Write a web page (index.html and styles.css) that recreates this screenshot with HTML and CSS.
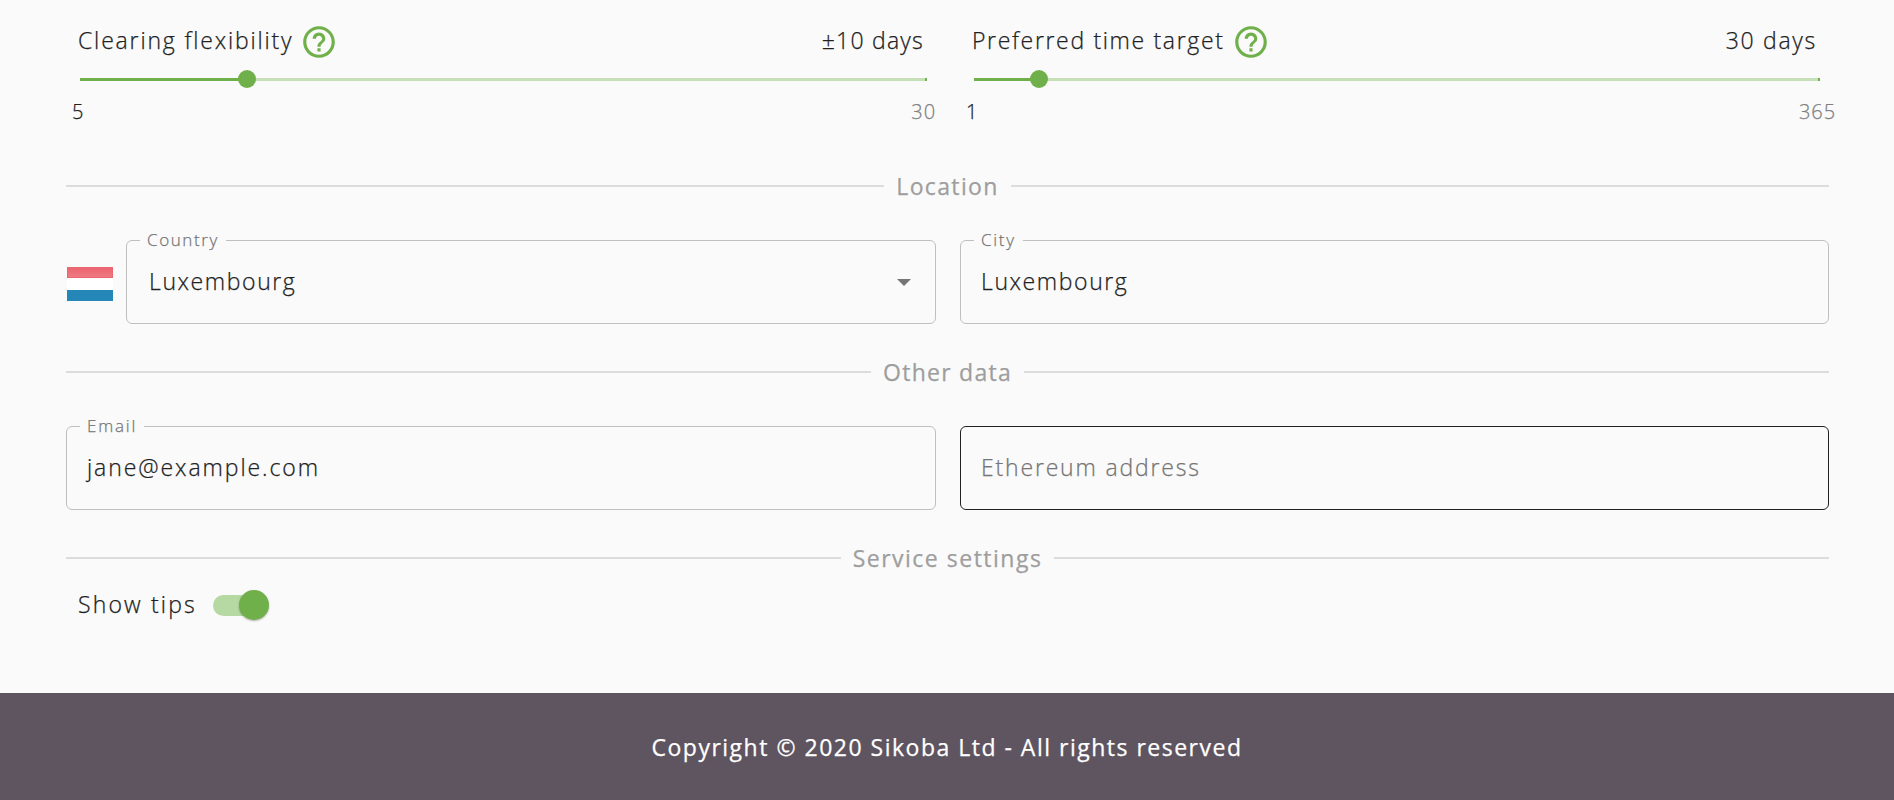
FILE: index.html
```html
<!DOCTYPE html>
<html lang="en">
<head>
<meta charset="utf-8">
<title>Account settings</title>
<link rel="stylesheet" href="styles.css">
</head>
<body>
<main class="settings">
  <section class="sliders">
    <div class="slider">
      <div class="slider-head">
        <span class="text t-clearing">Clearing flexibility</span>
        <svg class="help" viewBox="0 0 24 24"><path d="M11 18h2v-2h-2v2zm1-16C6.480 2 2 6.480 2 12s4.480 10 10 10 10-4.480 10-10S17.520 2 12 2zm0 18c-4.410 0-8-3.590-8-8s3.590-8 8-8 8 3.590 8 8-3.590 8-8 8zm0-14c-2.210 0-4 1.790-4 4h2c0-1.100.9-2 2-2s2 .9 2 2c0 2-3 1.750-3 5h2c0-2.250 3-2.500 3-5 0-2.210-1.790-4-4-4z"/></svg>
        <span class="text value t-ten">±10 days</span>
      </div>
      <div class="rail"><div class="track" style="width:19.7%"></div><div class="thumb" style="left:19.7%"></div><i class="mark"></i></div>
      <div class="limits"><span class="limit low">5</span><span class="limit high">30</span></div>
    </div>
    <div class="slider">
      <div class="slider-head">
        <span class="text t-preferred">Preferred time target</span>
        <svg class="help" viewBox="0 0 24 24"><path d="M11 18h2v-2h-2v2zm1-16C6.480 2 2 6.480 2 12s4.480 10 10 10 10-4.480 10-10S17.520 2 12 2zm0 18c-4.410 0-8-3.590-8-8s3.590-8 8-8 8 3.590 8 8-3.590 8-8 8zm0-14c-2.210 0-4 1.790-4 4h2c0-1.100.9-2 2-2s2 .9 2 2c0 2-3 1.750-3 5h2c0-2.250 3-2.500 3-5 0-2.210-1.790-4-4-4z"/></svg>
        <span class="text value t-thirty">30 days</span>
      </div>
      <div class="rail"><div class="track" style="width:7.7%"></div><div class="thumb" style="left:7.7%"></div><i class="mark"></i></div>
      <div class="limits"><span class="limit low">1</span><span class="limit high">365</span></div>
    </div>
  </section>

  <h2 class="divider"><span class="t-location">Location</span></h2>
  <section class="fields">
    <div class="country">
      <div class="flag"><i class="red"></i><i class="white"></i><i class="blue"></i></div>
      <div class="field select">
        <span class="label t-country">Country</span>
        <span class="text t-lux">Luxembourg</span>
        <svg class="arrow" viewBox="0 0 14 7"><path d="M0 0h14L7 7z"/></svg>
      </div>
    </div>
    <div class="field">
      <span class="label t-city">City</span>
      <span class="text t-lux">Luxembourg</span>
    </div>
  </section>

  <h2 class="divider"><span class="t-other">Other data</span></h2>
  <section class="fields">
    <div class="field">
      <span class="label t-email">Email</span>
      <span class="text t-jane">jane@example.com</span>
    </div>
    <div class="field hovered"><span class="text placeholder t-eth">Ethereum address</span></div>
  </section>

  <h2 class="divider"><span class="t-service">Service settings</span></h2>
  <div class="tips">
    <span class="text t-tips">Show tips</span>
    <span class="switch"><i class="knob"></i></span>
  </div>
</main>
<footer class="footer"><span class="t-copy">Copyright © 2020 Sikoba Ltd - All rights reserved</span></footer>
</body>
</html>
```
FILE: styles.css
```css
* { box-sizing: border-box; }
body {
  margin: 0;
  height: 800px;
  overflow: hidden;
  display: flex;
  flex-direction: column;
  background: #fafafa;
  color: #212121;
  font-family: "Open Sans", "Noto Sans", sans-serif;
  font-size: 23px;
  font-weight: 300;
  line-height: 32px;
}
i { display: block; }
span { white-space: nowrap; }
.text, .label, .limit, .divider span, .footer span { -webkit-text-stroke: .25px currentColor; }
.settings { height: 693px; padding: 22px 65px 0 66px; }

.sliders { display: grid; grid-template-columns: 870px 869px; column-gap: 24px; height: 148px; }
.slider-head { display: flex; align-items: center; height: 40px; padding: 0 12px 0 12px; }
.slider-head .text { margin-top: -5px; }
.help { width: 38px; height: 38px; margin-left: 7px; fill: #70b04a; }
.slider-head .value { margin-left: auto; }
.rail { position: relative; height: 3px; margin: 16px 9px 0 14px; background: #c5dfb6; }
.track { height: 3px; background: #70b04a; }
.thumb { position: absolute; top: -8px; width: 18px; height: 18px; margin-left: -9px; border-radius: 50%; background: #70b04a; }
.mark { position: absolute; right: 0; top: 0; width: 2px; height: 3px; background: #70b04a; }
.limits { display: flex; justify-content: space-between; height: 32px; margin-top: 15px; padding-left: 6px; font-size: 20px; letter-spacing: .9px; }
.high { color: #808080; }
.slider:last-child .high { margin-right: -7px; }

.divider { display: flex; align-items: center; gap: 12px; height: 32px; margin: 0; color: #9e9e9e; font-size: 23px; font-weight: 400; }
.divider span { height: 32px; }
.divider::before, .divider::after { content: ""; flex: 1; height: 2px; background: #dcdcdc; }

.fields { display: grid; grid-template-columns: 870px 869px; column-gap: 24px; height: 154px; padding-top: 38px; }
.country { display: flex; }
.flag { width: 46px; margin: 27px 13px 0 1px; }
.flag i { height: 11px; }
.flag .red { background: linear-gradient(#ec6570, #ee7a81); border: 1px solid #ea6670; }
.flag .white { height: 12px; background: #fff; }
.flag .blue { background: #2487b8; }
.field { position: relative; display: flex; align-items: center; height: 84px; padding: 0 20px; border: 1px solid #bfbfbf; border-radius: 6px; }
.field .text { height: 34px; }
.select { flex: 1; padding: 0 24px 0 22px; }
.hovered { border-color: #212121; }
.label { position: absolute; left: 13px; top: -13px; padding: 0 7px; background: #fafafa; color: #757575; font-size: 17px; line-height: 24px; }
.field .placeholder { color: #757575; }
.arrow { width: 14px; height: 7px; margin-left: auto; fill: #757575; }

.tips { display: flex; align-items: center; height: 32px; margin-top: 15px; padding-left: 12px; }
.tips .text { height: 34px; }
.switch { position: relative; width: 52px; height: 21px; margin-left: 16px; border-radius: 11px; background: #b6d8a3; }
.knob { position: absolute; left: 26px; top: -5px; width: 30px; height: 30px; border-radius: 50%; background: #70b04a; box-shadow: 0 1px 2px rgba(0, 0, 0, .3); }

.footer { display: flex; justify-content: center; height: 107px; padding-top: 38px; background: #5f5561; color: #fff; font-weight: 400; }

.t-clearing { letter-spacing: 1.83px; }
.t-preferred { letter-spacing: 1.66px; }
.t-ten { letter-spacing: 1.22px; }
.t-thirty { letter-spacing: 1.7px; }
.t-lux { letter-spacing: 1.6px; }
.t-jane { letter-spacing: 1.92px; }
.t-eth { letter-spacing: 1.82px; }
.t-tips { letter-spacing: 2.15px; }
.t-location { letter-spacing: 1.35px; }
.t-other { letter-spacing: 1.25px; }
.t-service { letter-spacing: 1.5px; }
.t-country { letter-spacing: 1.6px; }
.t-city { letter-spacing: 1.7px; }
.t-email { letter-spacing: 1.8px; }
.t-copy { letter-spacing: 1.5px; }
```
